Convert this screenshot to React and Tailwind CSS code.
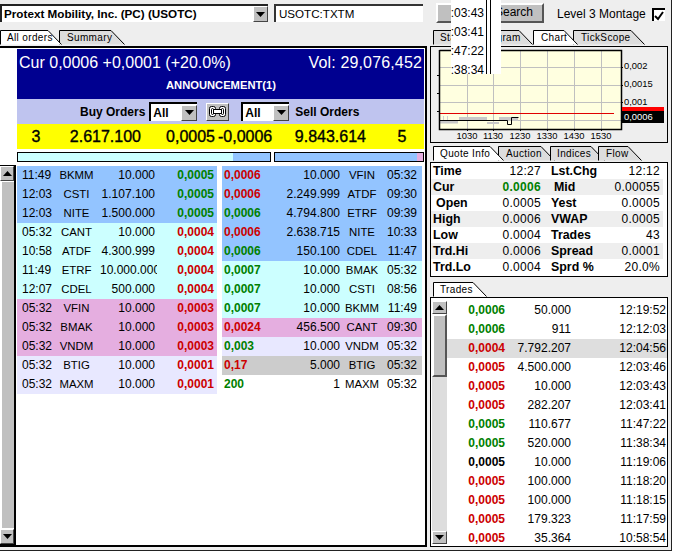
import React from "react";

const BLUE = "bg-[#93c4ff]", CYAN = "bg-[#ccffff]", PINK = "bg-[#e5aee0]", LAV = "bg-[#e8e8ff]", GRAY = "bg-[#cccccc]";
const G = "text-[#008000]", R = "text-[#cc0000]", K = "text-black";

const buys = [
  ["11:49", "BKMM", "10.000", "0,0005", G, BLUE],
  ["12:03", "CSTI", "1.107.100", "0,0005", G, BLUE],
  ["12:03", "NITE", "1.500.000", "0,0005", G, BLUE],
  ["05:32", "CANT", "10.000", "0,0004", R, CYAN],
  ["10:58", "ATDF", "4.300.999", "0,0004", R, CYAN],
  ["11:49", "ETRF", "10.000.000", "0,0004", R, CYAN],
  ["12:07", "CDEL", "500.000", "0,0004", R, CYAN],
  ["05:32", "VFIN", "10.000", "0,0003", R, PINK],
  ["05:32", "BMAK", "10.000", "0,0003", R, PINK],
  ["05:32", "VNDM", "10.000", "0,0003", R, PINK],
  ["05:32", "BTIG", "10.000", "0,0001", R, LAV],
  ["05:32", "MAXM", "10.000", "0,0001", R, LAV],
];
const sells = [
  ["0,0006", R, "10.000", "VFIN", "05:32", BLUE],
  ["0,0006", R, "2.249.999", "ATDF", "09:30", BLUE],
  ["0,0006", G, "4.794.800", "ETRF", "09:39", BLUE],
  ["0,0006", R, "2.638.715", "NITE", "10:33", BLUE],
  ["0,0006", G, "150.100", "CDEL", "11:47", BLUE],
  ["0,0007", G, "10.000", "BMAK", "05:32", CYAN],
  ["0,0007", G, "10.000", "CSTI", "08:56", CYAN],
  ["0,0007", G, "10.000", "BKMM", "11:49", CYAN],
  ["0,0024", R, "456.500", "CANT", "09:30", PINK],
  ["0,003", G, "10.000", "VNDM", "05:32", LAV],
  ["0,17", R, "5.000", "BTIG", "05:32", GRAY],
  ["200", G, "1", "MAXM", "05:32", "bg-white"],
];
const quotes = [
  ["Time", "12:27", "Lst.Chg", "12:12"],
  ["Cur", "0.0006", "Mid", "0.00055"],
  ["Open", "0.0005", "Yest", "0.0005"],
  ["High", "0.0006", "VWAP", "0.0005"],
  ["Low", "0.0004", "Trades", "43"],
  ["Trd.Hi", "0.0006", "Spread", "0.0001"],
  ["Trd.Lo", "0.0004", "Sprd %", "20.0%"],
];
const trades = [
  ["0,0006", G, "50.000", "12:19:52"],
  ["0,0006", G, "911", "12:12:03"],
  ["0,0004", R, "7.792.207", "12:04:56"],
  ["0,0005", R, "4.500.000", "12:03:46"],
  ["0,0005", R, "10.000", "12:03:43"],
  ["0,0005", R, "282.207", "12:03:41"],
  ["0,0005", G, "110.677", "11:47:22"],
  ["0,0005", G, "520.000", "11:38:34"],
  ["0,0005", K, "10.000", "11:19:06"],
  ["0,0005", R, "100.000", "11:18:20"],
  ["0,0005", R, "100.000", "11:18:15"],
  ["0,0005", R, "179.323", "11:17:59"],
  ["0,0005", R, "35.364", "10:58:54"],
];

function Tab({ label, w, active, textLeft = 7, className = "" }) {
  const top = w - 14;
  return (
    <div className={`relative h-[14px] shrink-0 text-[10px] leading-[16px] tracking-[0.35px] text-black ${active ? "z-10" : ""} ${className}`} style={{ width: w }}>
      <svg className="absolute inset-0" width={w} height="15">
        <path d={`M0.5 14.5 V0.5 H${top} L${w - 0.5} 14.5`} fill={active ? "#ffffff" : "#dddddd"} stroke="#000" strokeWidth="1" />
      </svg>
      <span className="relative whitespace-nowrap" style={{ marginLeft: textLeft }}>{label}</span>
    </div>
  );
}

function Arrow({ up, className = "" }) {
  return (
    <div className={`flex items-center justify-center bg-[#c0c0c0] border border-t-white border-l-white border-r-[#444444] border-b-[#444444] ${className}`}>
      <svg width="9" height="5" viewBox="0 0 9 5">
        <path d={up ? "M4.5 0 L9 5 H0 Z" : "M0 0 H9 L4.5 5 Z"} fill="#000" />
      </svg>
    </div>
  );
}

function SmallSelect() {
  return (
    <div className="flex h-[19px] w-[48px] items-center justify-between border-t-2 border-l-2 border-t-black border-l-black bg-white text-[12px] font-bold">
      <span className="pl-[2px]">All</span>
      <Arrow className="h-[16px] w-[16px]" />
    </div>
  );
}

function ChainIcon() {
  return (
    <svg width="19" height="13" viewBox="0 0 19 13" fill="none" stroke="#000" strokeWidth="1">
      <rect x="1.5" y="1.5" width="6" height="10" rx="2" fill="#fff" />
      <rect x="3.5" y="3.5" width="2" height="6" rx="1" />
      <rect x="11.5" y="1.5" width="6" height="10" rx="2" fill="#fff" />
      <rect x="13.5" y="3.5" width="2" height="6" rx="1" />
      <rect x="5.5" y="4.5" width="8" height="4" fill="#fff" />
    </svg>
  );
}

function Chart() {
  const vs = [467, 493, 520, 547, 574, 601];
  const hs = [67, 85, 102, 120];
  const labels = [["1030", 467], ["1130", 493], ["1230", 520], ["1330", 547], ["1430", 574], ["1530", 601]];
  return (
    <svg width="236" height="95" viewBox="431 47 236 95" className="block">
      <rect x="440" y="50" width="181" height="79" fill="#ffffe0" />
      {vs.map((x) => <line key={x} x1={x + 0.5} x2={x + 0.5} y1="50" y2="129" stroke="#c0c0c0" />)}
      {hs.map((y) => <line key={y} y1={y + 0.5} y2={y + 0.5} x1="440" x2="621" stroke="#c0c0c0" />)}
      <rect x="440" y="121" width="18" height="2.5" fill="#c8c8c8" />
      <rect x="459" y="117" width="28" height="4" fill="#c8c8c8" />
      <rect x="487" y="122" width="12" height="2" fill="#c8c8c8" />
      <rect x="499" y="117" width="19" height="4" fill="#c8c8c8" />
      <path d="M443.5 116V120M447.5 116V120" stroke="#d0d0d0" />
      <line x1="440" x2="614" y1="113.5" y2="113.5" stroke="#e00000" />
      <path d="M440 120.5H507.5V124.5H511.5V117.5H518.5" fill="none" stroke="#000" />
      <path d="M439.5 50V129.5H621.5V50.5H439.5" fill="none" stroke="#000" strokeWidth="1.5" />
      {hs.map((y) => <line key={y} y1={y + 0.5} y2={y + 0.5} x1="621" x2="623" stroke="#000" />)}
      {[75, 93, 111].map((y) => <line key={y} y1={y + 0.5} y2={y + 0.5} x1="437" x2="440" stroke="#000" />)}
      {vs.map((x) => <line key={x} x1={x + 0.5} x2={x + 0.5} y1="129" y2="131" stroke="#000" />)}
      <g fontFamily="Liberation Sans" fontSize="9.4" fill="#000">
        <text x="624" y="69">0,002</text>
        <text x="624" y="87">0,0015</text>
        <text x="624" y="105">0,001</text>
        <rect x="622" y="107" width="42" height="5" fill="#ff0000" />
        <rect x="622" y="111" width="42" height="12" fill="#000" />
        <text x="624" y="120" fill="#fff">0,0006</text>
        {labels.map(([t, x]) => <text key={t} x={x} y="139" textAnchor="middle">{t}</text>)}
      </g>
    </svg>
  );
}

export default function App() {
  return (
    <div className="relative h-[553px] w-[682px] overflow-hidden bg-white font-['Liberation_Sans',Arial,sans-serif] text-black">
      <div className="h-[551px] w-[672px] border-r border-b border-r-[#222222] border-b-[#222222] bg-[#eeeeee]">
        {/* top bar */}
        <div className="flex h-[30px] items-start pt-[4px]">
          <div className="flex h-[18px] w-[268px] items-center justify-between border-t-2 border-l-2 border-t-[#222222] border-l-[#222222] bg-white">
            <span className="whitespace-nowrap pl-[2px] text-[11.7px] font-bold">Protext Mobility, Inc. (PC) (USOTC)</span>
            <Arrow className="h-[16px] w-[15px]" />
          </div>
          <div className="ml-[6px] flex h-[18px] w-[149px] items-center border-t-2 border-l-2 border-t-[#333333] border-l-[#333333] bg-white pl-[3px] text-[11.6px]">
            USOTC:TXTM
          </div>
          <div className="ml-[13px] -mt-[1px] h-[20px] w-[108px] border-2 border-t-white border-l-white border-r-[#555555] border-b-[#555555] bg-[#c0c0c0] pr-[9px] text-right text-[12px] leading-[15px]">
            Search
          </div>
          <div className="ml-[13px] mt-[1px] whitespace-nowrap text-[12px]">Level 3 Montage</div>
          <div className="ml-[6px] mt-[4px] flex h-[13px] w-[13px] items-center justify-center border-t-2 border-l-2 border-t-black border-l-black bg-white">
            <svg width="10" height="10" viewBox="0 0 10 10"><path d="M1 5 L4 8 L9 1" fill="none" stroke="#000" strokeWidth="2" /></svg>
          </div>
        </div>

        <div className="flex">
          {/* left */}
          <div className="w-[427px] shrink-0">
            <div className="flex h-[14px]">
              <Tab label="All orders" w={62} active />
              <Tab label="Summary" w={66} textLeft={8} className="-ml-[3px]" />
            </div>
            <div className="mt-[2px] h-[501px] border-t-2 border-r-2 border-b-2 border-t-black border-r-black border-b-black bg-white">
              <div className="pt-[1px] pl-[17px]">
                <div className="h-[50px] w-[407px] bg-[#000090] text-white">
                  <div className="flex h-[27px] items-center justify-between pl-[2px] pr-[2px] text-[16px]">
                    <span>Cur 0,0006 +0,0001 (+20.0%)</span>
                    <span className="tracking-[0.15px]">Vol: 29,076,452</span>
                  </div>
                  <div className="mt-[2px] pl-[1px] text-center text-[11.2px] font-bold leading-[15px]">ANNOUNCEMENT(1)</div>
                </div>
                <div className="flex h-[25px] w-[407px] items-center bg-[#bfc4ef] pl-[63px] text-[12px] font-bold">
                  <span>Buy Orders</span>
                  <span className="ml-[4px]"><SmallSelect /></span>
                  <div className="ml-[9px] flex h-[18px] w-[23px] items-center justify-center border border-t-white border-l-white border-r-[#444444] border-b-[#444444] bg-[#c0c0c0]"><ChainIcon /></div>
                  <span className="ml-[12px]"><SmallSelect /></span>
                  <span className="ml-[6px]">Sell Orders</span>
                </div>
                <div className="flex h-[25px] w-[407px] items-center bg-[#ffff00] text-[16px] [-webkit-text-stroke:0.35px_black]">
                  <span className="w-[38px] text-center">3</span>
                  <span className="w-[86px] text-right">2.617.100</span>
                  <span className="w-[74px] text-right">0,0005</span>
                  <span className="ml-[3px] w-[52px]">-0,0006</span>
                  <span className="w-[96px] text-right">9.843.614</span>
                  <span className="ml-[31px] w-[10px] text-center">5</span>
                </div>
                <div className="mt-[3px] flex gap-[3px]">
                  <div className="flex h-[10px] w-[254px] border border-black bg-[#93c4ff]">
                    <div className="h-full w-[215px] bg-[#ccffff]" />
                  </div>
                  <div className="flex h-[10px] w-[150px] justify-end border border-black bg-[#93c4ff]">
                    <div className="h-full w-[6px] bg-[#e5aee0]" />
                  </div>
                </div>
              </div>
              <div className="mt-[3px] flex">
                {/* vertical scrollbar */}
                <div className="flex h-[380px] w-[16px] shrink-0 flex-col border-r-2 border-t border-b border-black">
                  <Arrow up className="h-[15px] w-[14px] shrink-0" />
                  <div className="mt-[1px] flex-1 border-l-2 border-l-white bg-[#c0c0c0]" />
                  <Arrow className="mt-[1px] h-[15px] w-[14px] shrink-0" />
                </div>
                <div className="flex gap-[5px] pl-[1px] pt-[1px] text-[12px] leading-[19px]">
                  <div className="w-[200px]">
                    {buys.map((r, i) => (
                      <div key={i} className={`flex h-[19px] pl-[5px] ${r[5]}`}>
                        <span className="w-[31px] shrink-0">{r[0]}</span>
                        <span className="w-[47px] shrink-0 text-center text-[11.4px]">{r[1]}</span>
                        <span className="w-[57px] shrink-0 overflow-hidden whitespace-nowrap pr-[2px] text-right">{r[2]}</span>
                        <span className={`w-[57px] shrink-0 text-right font-bold ${r[4]}`}>{r[3]}</span>
                      </div>
                    ))}
                  </div>
                  <div className="w-[200px]">
                    {sells.map((r, i) => (
                      <div key={i} className={`flex h-[19px] pl-[2px] ${r[5]}`}>
                        <span className={`w-[40px] shrink-0 font-bold ${r[1]}`}>{r[0]}</span>
                        <span className="w-[76px] shrink-0 text-right">{r[2]}</span>
                        <span className="w-[44px] shrink-0 text-center text-[11.4px]">{r[3]}</span>
                        <span className="w-[33px] shrink-0 text-right">{r[4]}</span>
                      </div>
                    ))}
                  </div>
                </div>
              </div>
            </div>
          </div>

          {/* right */}
          <div className="ml-[3px] w-[238px] shrink-0">
            <div className="flex h-[14px] pl-[3px]">
              <Tab label="Stats" w={37} />
              <Tab label="Histogram" w={68} className="-ml-[5px]" />
              <Tab label="Chart" w={45} textLeft={8} active />
              <Tab label="TickScope" w={72} textLeft={8} className="-ml-[5px]" />
            </div>
            <div className="mt-[2px] h-[97px] border border-black bg-[#eeeeee]"><Chart /></div>

            <div className="mt-[3px] flex h-[14px] pl-[3px]">
              <Tab label="Quote Info" w={71} active />
              <Tab label="Auction" w={57} textLeft={8} className="-ml-[6px]" />
              <Tab label="Indices" w={55} textLeft={7} className="-ml-[5px]" />
              <Tab label="Flow" w={44} textLeft={8} className="-ml-[7px]" />
            </div>
            <div className="mt-[2px] h-[115px] border border-black bg-white pr-[4px]">
              {quotes.map((q, i) => (
                <div key={i} className={`flex h-[16px] items-center text-[12px] ${i % 2 === 1 ? "bg-[#eeeeee]" : ""}`}>
                  <span className={`w-[48px] shrink-0 text-[12.4px] font-bold ${q[0] === "Open" ? "pl-[5px]" : "pl-[2px]"}`}>{q[0]}</span>
                  <span className={`w-[62px] shrink-0 text-right tracking-[0.3px] ${i === 1 ? "font-bold text-[#008000]" : ""}`}>{q[1]}</span>
                  <span className={`ml-[10px] w-[52px] shrink-0 text-[12.4px] font-bold ${q[2] === "Mid" ? "pl-[3px]" : ""}`}>{q[2]}</span>
                  <span className="w-[57px] shrink-0 text-right tracking-[0.3px]">{q[3]}</span>
                </div>
              ))}
            </div>

            <div className="mt-[5px] flex h-[14px] pl-[3px]">
              <Tab label="Trades" w={54} active />
            </div>
            <div className="mt-[1px] flex h-[250px] border border-black bg-white">
              <div className="ml-[1px] mt-[3px] mb-[2px] flex w-[15px] shrink-0 flex-col bg-[#dddddd]">
                <Arrow up className="h-[13px] w-[15px] shrink-0" />
                <div className="h-[63px] w-[15px] shrink-0 border-2 border-t-white border-l-white border-r-[#555555] border-b-[#555555] bg-[#c0c0c0]" />
                <div className="flex-1" />
                <Arrow className="h-[13px] w-[15px] shrink-0" />
              </div>
              <div className="mt-[3px] flex-1 overflow-hidden text-[12px] leading-[19px]">
                {trades.map((t, i) => (
                  <div key={i} className={`flex h-[19px] ${i === 2 ? "bg-[#dedede]" : ""}`}>
                    <span className={`w-[58px] shrink-0 text-right font-bold ${t[1]}`}>{t[0]}</span>
                    <span className="w-[66px] shrink-0 text-right">{t[2]}</span>
                    <span className="w-[95px] shrink-0 text-right">{t[3]}</span>
                  </div>
                ))}
              </div>
            </div>
          </div>
        </div>
      </div>

      {/* stray popup painted over the top of the window */}
      <div className="absolute left-[451px] top-0 flex h-[74px] w-[50px] bg-white">
        <div className="h-full w-[35px] overflow-hidden pt-[4px] text-[12px] leading-[19px]">
          {["12:03:43", "12:03:41", "11:47:22", "11:38:34"].map((t) => (
            <div key={t} className="flex h-[19px] justify-end whitespace-nowrap pr-[2px]">{t}</div>
          ))}
        </div>
        <div className="h-full w-[5px] border-x border-black" />
      </div>
    </div>
  );
}
